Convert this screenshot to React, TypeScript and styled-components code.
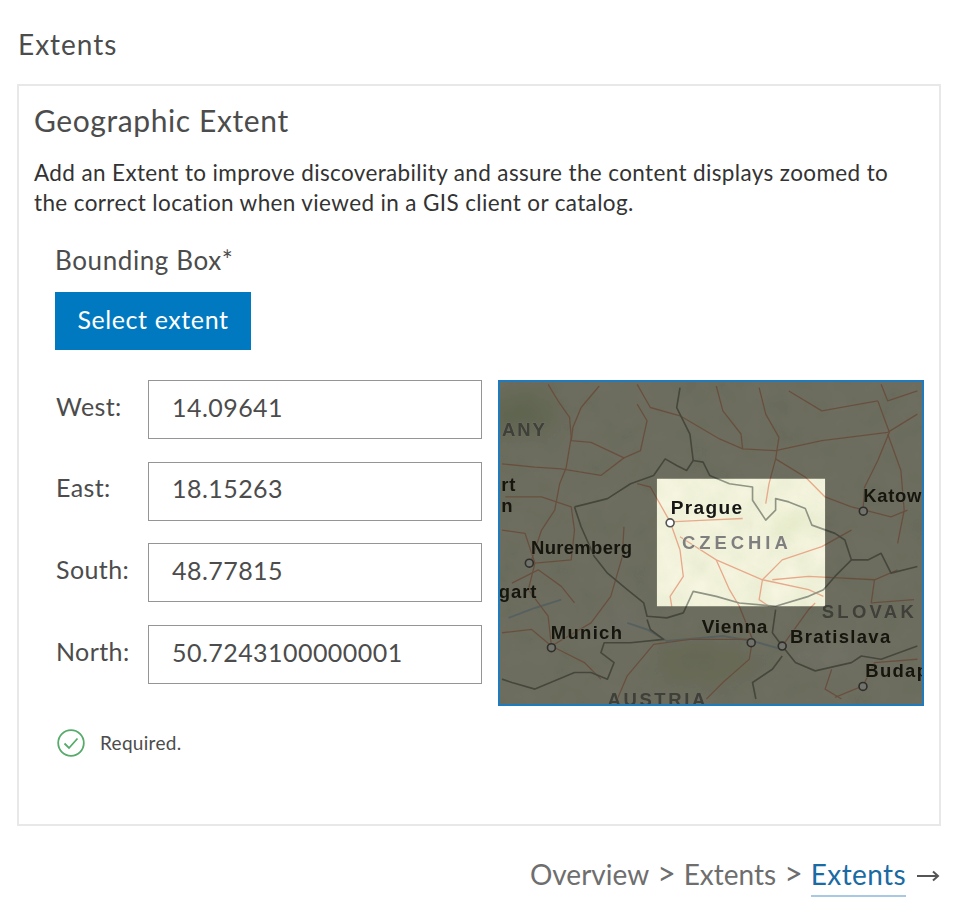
import React from "react";
import styled, { createGlobalStyle } from "styled-components";

const Global = createGlobalStyle`
  html, body { margin: 0; padding: 0; background: #fff; }
  body { font-family: "Lato", "Noto Sans", sans-serif; color: #4c4c4c; }
`;

const Page = styled.div`
  width: 960px;
  height: 904px;
  box-sizing: border-box;
  padding: 26px 19px 0 17px;
  overflow: hidden;
`;

const SectionTitle = styled.h2`
  margin: 0 0 22px 1px;
  font-size: 28px;
  line-height: 36px;
  letter-spacing: 1px;
  font-weight: 400;
  color: #4c4c4c;
`;

const Card = styled.section`
  box-sizing: border-box;
  height: 742px;
  border: 2px solid #e8e8e8;
  padding: 15px 15px 0 15px;
`;

const CardTitle = styled.h3`
  margin: 0 0 19px;
  font-size: 30px;
  line-height: 38px;
  letter-spacing: 0.6px;
  font-weight: 400;
  color: #4c4c4c;
`;

const Intro = styled.p`
  margin: 0;
  font-size: 22.5px;
  line-height: 30px;
  letter-spacing: 0.37px;
  color: #333;
`;

const Body = styled.div`
  padding: 25px 0 0 21px;
`;

const GroupLabel = styled.div`
  font-size: 26px;
  line-height: 34px;
  letter-spacing: 0.6px;
  color: #4c4c4c;
`;

const PrimaryButton = styled.button`
  display: block;
  box-sizing: border-box;
  width: 196px;
  height: 58px;
  margin-top: 15px;
  padding: 0 0 4px;
  border: 0;
  background: #0079c1;
  color: #fff;
  font-family: inherit;
  font-size: 25px;
  letter-spacing: 0.6px;
`;

const ExtentGrid = styled.div`
  display: flex;
  margin-top: 30px;
  gap: 16px;
`;

const Fields = styled.div`
  display: flex;
  flex-direction: column;
  gap: 22.7px;
`;

const FieldRow = styled.label`
  display: flex;
  align-items: center;
  width: 427px;
  height: 59px;
`;

const FieldName = styled.span`
  width: 93px;
  box-sizing: border-box;
  padding-left: 1px;
  font-size: 25px;
  letter-spacing: 0.4px;
  color: #4c4c4c;
  position: relative;
  top: -4px;
`;

const FieldInput = styled.input`
  box-sizing: border-box;
  width: 334px;
  height: 59px;
  padding: 0 0 6px 23px;
  border: 1px solid #959595;
  border-radius: 0;
  background: #fff;
  color: #4c4c4c;
  font-family: inherit;
  font-size: 25px;
  letter-spacing: 0.45px;
  outline: none;
`;

const MapFrame = styled.div`
  box-sizing: border-box;
  width: 427px;
  height: 326px;
  border: 2px solid #1f7bbd;
  background: #6c6b59;
  overflow: hidden;
  svg { display: block; width: 100%; height: 100%; }
`;

const Validation = styled.div`
  display: flex;
  align-items: center;
  gap: 15px;
  margin: 23px 0 0 2px;
  font-size: 19px;
  line-height: 28px;
  letter-spacing: 0.3px;
  color: #4c4c4c;
`;

const Crumbs = styled.nav`
  display: flex;
  justify-content: flex-end;
  align-items: center;
  margin-top: 27px;
  padding-right: 1px;
  font-size: 28px;
  line-height: 40px;
  color: #6e6e6e;
`;

const Crumb = styled.span<{ $active?: boolean }>`
  color: ${(p) => (p.$active ? "#1a6aa3" : "#6e6e6e")};
  border-bottom: 2px solid ${(p) => (p.$active ? "#a9c9e2" : "transparent")};
  padding-bottom: 1px;
  letter-spacing: ${(p) => (p.$active ? "0.4px" : "0")};
`;

const Sep = styled.span`
  margin: 0 8px;
  font-size: 32px;
  font-weight: 400;
  padding-bottom: 5px;
`;

const Arrow = styled.svg`
  width: 24px;
  height: 14px;
  margin-left: 10px;
`;

const roads = [
  "M170 40 L200 90 L235 140 L240 200 L225 290 L205 340 L190 420 L150 480 L120 570",
  "M325 45 L270 110 L245 170 L240 210 L300 215 L400 262 L450 240 L470 150 L440 100",
  "M440 40 L480 110 L570 135 L690 205 L760 235 L860 240 L1000 210 L1200 185 L1290 130",
  "M680 45 L700 120 L755 190 L760 235",
  "M810 50 L830 130 L870 200 L860 265 L840 340 L830 400",
  "M860 265 L950 320 L1010 380 L1090 410 L1130 420 L1210 440 L1260 420",
  "M1170 90 L1205 185 L1170 270 L1130 350 L1125 420",
  "M1180 40 L1200 90 L1290 60",
  "M30 280 L130 290 L210 295 L330 315 L400 262",
  "M30 480 L100 490 L130 580 L240 570 L250 480 L240 410 L150 380 L40 380",
  "M130 580 L110 660 L170 740 L180 830 L280 880 L330 930",
  "M180 830 L120 780 L30 790",
  "M180 830 L300 760 L360 680 L395 560 L400 470",
  "M540 455 L480 350 L440 340",
  "M540 455 L570 540 L580 620 L540 680 L545 710",
  "M540 455 L650 450 L760 445",
  "M570 500 L680 570 L820 630 L960 660 L1005 680",
  "M680 570 L720 660 L750 710 L790 810",
  "M820 630 L880 570 L1000 530 L1090 480",
  "M820 630 L810 690 L840 710",
  "M850 630 L960 620 L1160 630 L1230 600",
  "M1160 630 L1150 700 L1280 690",
  "M790 810 L780 870 L700 940 L650 990",
  "M790 810 L600 810 L490 825 L410 920 L380 990",
  "M880 830 L960 720 L980 700",
  "M1125 950 L1160 880 L1290 870",
  "M1125 950 L1040 985",
  "M1200 190 L1240 300 L1250 420 L1230 520",
  "M60 640 L140 600 L210 650 L250 700",
  "M1030 900 L1010 960 L1060 990",
  "M900 60 L1000 120 L1170 90",
];

const borders = [
  "M250 410 L290 400 L350 385 L420 340 L490 315 L525 265 L560 285 L590 300 L610 270 L640 275 L660 315 L720 340 L790 350 L790 390 L830 450 L860 420 L860 385 L900 395 L950 415 L970 465 L1040 490 L1070 510 L1090 570 L1140 570 L1180 550 L1210 610 L1290 590",
  "M250 410 L270 470 L310 560 L350 610 L410 660 L460 700 L470 740 L530 745 L580 730 L610 665 L680 680 L750 700 L860 710 L960 680 L1005 660 L1040 620 L1090 570",
  "M570 50 L560 110 L600 190 L610 270",
  "M860 720 L850 790 L880 830 L920 880 L980 905 L1090 880 L1120 860 L1180 870 L1290 830",
  "M470 750 L480 780 L520 810 L420 820 L340 820 L330 850 L370 880 L350 930 L300 910 L250 910 L130 960 L60 940 L30 930",
  "M800 990 L790 940 L850 900 L880 860",
];

type Label = { x: number; y: number; s: string; size: number; ls: number; muted?: boolean };
const labels: Label[] = [
  { x: 30, y: 196, s: "ANY", size: 56, muted: true, ls: 6 },
  { x: 28, y: 362, s: "rt", size: 56, ls: 2 },
  { x: 10, y: 424, s: "in", size: 56, ls: 2 },
  { x: 118, y: 552, s: "Nuremberg", size: 56, ls: 1 },
  { x: 20, y: 684, s: "gart", size: 56, ls: 3 },
  { x: 178, y: 808, s: "Munich", size: 56, ls: 4 },
  { x: 542, y: 430, s: "Prague", size: 58, ls: 4 },
  { x: 576, y: 536, s: "CZECHIA", size: 56, muted: true, ls: 12 },
  { x: 636, y: 792, s: "Vienna", size: 58, ls: 2 },
  { x: 904, y: 820, s: "Bratislava", size: 56, ls: 4 },
  { x: 1000, y: 746, s: "SLOVAK", size: 56, muted: true, ls: 10 },
  { x: 1126, y: 396, s: "Katow", size: 56, ls: 2 },
  { x: 1132, y: 924, s: "Budap", size: 56, ls: 4 },
  { x: 350, y: 1012, s: "AUSTRIA", size: 56, muted: true, ls: 8 },
];

const cities = [
  [540, 458],
  [113, 580],
  [180, 835],
  [786, 820],
  [880, 830],
  [1126, 423],
  [1125, 952],
];

const CZMap = () => (
  <svg viewBox="24 33 1280 972" preserveAspectRatio="none" aria-label="Map">
    <defs>
      <filter id="soft" x="-5%" y="-5%" width="110%" height="110%">
        <feGaussianBlur stdDeviation="1.8" />
      </filter>
      <filter id="blob" x="-30%" y="-30%" width="160%" height="160%">
        <feGaussianBlur stdDeviation="30" />
      </filter>
      <filter id="mottle" x="0" y="0" width="100%" height="100%">
        <feTurbulence type="fractalNoise" baseFrequency="0.012" numOctaves="4" seed="7" />
        <feColorMatrix values="0 0 0 0 0.62  0 0 0 0 0.7  0 0 0 0 0.45  0.9 0 0 0 -0.2" />
      </filter>
    </defs>
    <g filter="url(#soft)">
      <rect x="24" y="33" width="1280" height="972" fill="#f6f5e0" />
      <rect x="24" y="33" width="1280" height="972" filter="url(#mottle)" opacity="0.5" />
      <g filter="url(#blob)" opacity="0.55">
        <ellipse cx="90" cy="130" rx="110" ry="70" fill="#bcd09c" />
        <ellipse cx="900" cy="460" rx="60" ry="25" fill="#d5e2b0" />
        <ellipse cx="640" cy="880" rx="150" ry="60" fill="#d4dfae" />
        <ellipse cx="1040" cy="860" rx="110" ry="40" fill="#ffffff" />
        <ellipse cx="400" cy="760" rx="90" ry="50" fill="#f6f6f2" />
      </g>
      <path d="M50 745 L130 715 L210 690" stroke="#b9d4dc" strokeWidth="6" fill="none" />
      <path d="M410 760 L470 780 L530 815 L700 800 L790 815 L880 840" stroke="#b9d4dc" strokeWidth="6" fill="none" />
      <g fill="none" stroke="#e7a98a" strokeWidth="4" strokeLinejoin="round">
        {roads.map((d, i) => (
          <path key={i} d={d} />
        ))}
      </g>
      <g fill="none" stroke="#8f9484" strokeWidth="5" strokeLinejoin="round">
        {borders.map((d, i) => (
          <path key={i} d={d} />
        ))}
      </g>
      <g fontFamily="'Liberation Sans', Arial, sans-serif" fontWeight="700">
        {labels.map((l) => (
          <text
            key={l.s}
            x={l.x}
            y={l.y}
            fontSize={l.size}
            letterSpacing={l.ls}
            fill={l.muted ? "#7f7f7f" : "#141414"}
            stroke="#f3f2dc"
            strokeWidth="3"
            paintOrder="stroke"
          >
            {l.s}
          </text>
        ))}
      </g>
      {cities.map(([x, y]) => (
        <circle key={`${x}-${y}`} cx={x} cy={y} r="12" fill="#fff" stroke="#555" strokeWidth="5" />
      ))}
      <path
        fillRule="evenodd"
        fill="rgba(20,20,12,0.6)"
        d="M24 33 H1304 V1005 H24 Z M500 325 V710 H1010 V325 Z"
      />
    </g>
  </svg>
);

const CheckIcon = () => (
  <svg width="28" height="28" viewBox="0 0 28 28" fill="none" stroke="#56ab6b">
    <circle cx="14" cy="14" r="12.8" strokeWidth="1.8" />
    <path d="M7.5 14.5 L12 19 L20.5 9.5" strokeWidth="1.8" />
  </svg>
);

const fields = [
  ["West:", "14.09641"],
  ["East:", "18.15263"],
  ["South:", "48.77815"],
  ["North:", "50.7243100000001"],
];

export default function App() {
  return (
    <Page>
      <Global />
      <SectionTitle>Extents</SectionTitle>
      <Card>
        <CardTitle>Geographic Extent</CardTitle>
        <Intro>
          Add an Extent to improve discoverability and assure the content displays zoomed to
          <br />
          the correct location when viewed in a GIS client or catalog.
        </Intro>
        <Body>
          <GroupLabel>Bounding Box*</GroupLabel>
          <PrimaryButton>Select extent</PrimaryButton>
          <ExtentGrid>
            <Fields>
              {fields.map(([name, value]) => (
                <FieldRow key={name}>
                  <FieldName>{name}</FieldName>
                  <FieldInput readOnly value={value} />
                </FieldRow>
              ))}
            </Fields>
            <MapFrame>
              <CZMap />
            </MapFrame>
          </ExtentGrid>
          <Validation>
            <CheckIcon />
            <span>Required.</span>
          </Validation>
        </Body>
      </Card>
      <Crumbs>
        <Crumb>Overview</Crumb>
        <Sep>&gt;</Sep>
        <Crumb>Extents</Crumb>
        <Sep>&gt;</Sep>
        <Crumb $active>Extents</Crumb>
        <Arrow viewBox="0 0 24 14" fill="none" stroke="#555" strokeWidth="2">
          <path d="M1 7 H22 M17 2.5 L22 7 L17 11.5" />
        </Arrow>
      </Crumbs>
    </Page>
  );
}
